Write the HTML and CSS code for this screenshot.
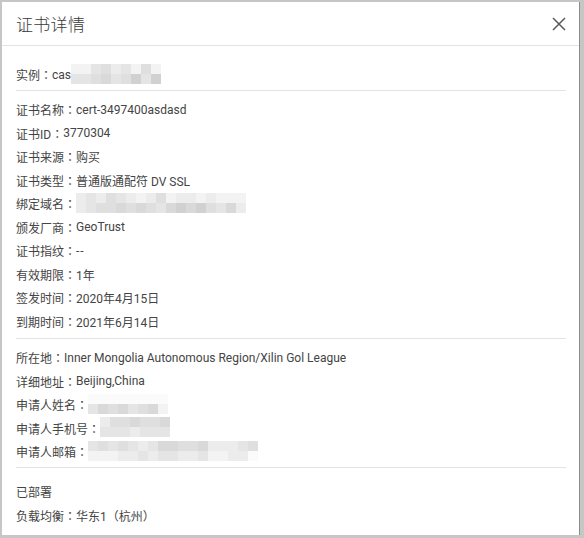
FILE: index.html
```html
<!DOCTYPE html>
<html lang="zh-CN">
<head>
<meta charset="utf-8">
<title>证书详情</title>
<link rel="stylesheet" href="styles.css">
</head>
<body>
<div class="modal">
  <div class="modal-header">
    <span class="modal-title">证书详情</span>
    <svg class="close" width="14" height="14" viewBox="0 0 14 14" aria-label="关闭"><path d="M1 1L13 13M13 1L1 13" stroke="#5a5a5a" stroke-width="1.5" fill="none"/></svg>
  </div>
  <div class="section first">
    <div class="row">实例<span class="p">：</span>cas<span class="mosaic"><i class="s1"></i><i class="s3"></i><i class="s1"></i><i class="s3"></i><i class="s3"></i><i class="s4"></i><i class="s4"></i><i class="s5"></i><i class="s2"></i><i class="s3"></i><i class="s3"></i><i class="s4"></i><i class="s1"></i><i class="s6"></i><i class="s4"></i><i class="s3"></i><i class="s1"></i><i class="s6"></i></span></div>
  </div>
  <div class="section">
    <div class="row">证书名称<span class="p">：</span>cert-3497400asdasd</div>
    <div class="row">证书ID<span class="p">：</span>3770304</div>
    <div class="row">证书来源<span class="p">：</span>购买</div>
    <div class="row">证书类型<span class="p">：</span>普通版通配符 DV SSL</div>
    <div class="row">绑定域名<span class="p">：</span><span class="mosaic"><i class="s2"></i><i class="s2"></i><i class="s3"></i><i class="s3"></i><i class="s2"></i><i class="s4"></i><i class="s4"></i><i class="s4"></i><i class="s3"></i><i class="s5"></i><i class="s2"></i><i class="s4"></i><i class="s1"></i><i class="s5"></i><i class="s2"></i><i class="s4"></i><i class="s4"></i><i class="s3"></i><i class="s1"></i><i class="s5"></i><i class="s2"></i><i class="s6"></i><i class="s2"></i><i class="s5"></i><i class="s1"></i><i class="s6"></i><i class="s2"></i><i class="s4"></i><i class="s1"></i><i class="s3"></i><i class="s1"></i><i class="s5"></i><i class="s1"></i><i class="s2"></i></span></div>
    <div class="row">颁发厂商<span class="p">：</span>GeoTrust</div>
    <div class="row">证书指纹<span class="p">：</span><span class="dash">--</span></div>
    <div class="row">有效期限<span class="p">：</span>1年</div>
    <div class="row">签发时间<span class="p">：</span>2020年4月15日</div>
    <div class="row">到期时间<span class="p">：</span>2021年6月14日</div>
  </div>
  <div class="section">
    <div class="row">所在地<span class="p">：</span>Inner Mongolia Autonomous Region/Xilin Gol League</div>
    <div class="row">详细地址<span class="p">：</span>Beijing,China</div>
    <div class="row">申请人姓名<span class="p">：</span><span class="mosaic"><i class="s0"></i><i class="s3"></i><i class="s0"></i><i class="s5"></i><i class="s0"></i><i class="s4"></i><i class="s0"></i><i class="s5"></i><i class="s0"></i><i class="s3"></i><i class="s0"></i><i class="s4"></i><i class="s0"></i><i class="s5"></i><i class="s0"></i><i class="s1"></i></span></div>
    <div class="row">申请人手机号<span class="p">：</span><span class="mosaic"><i class="s2"></i><i class="s3"></i><i class="s4"></i><i class="s3"></i><i class="s4"></i><i class="s3"></i><i class="s5"></i><i class="s2"></i><i class="s4"></i><i class="s3"></i><i class="s4"></i><i class="s3"></i><i class="s5"></i><i class="s3"></i></span></div>
    <div class="row">申请人邮箱<span class="p">：</span><span class="mosaic"><i class="s3"></i><i class="s1"></i><i class="s4"></i><i class="s1"></i><i class="s3"></i><i class="s1"></i><i class="s4"></i><i class="s2"></i><i class="s3"></i><i class="s2"></i><i class="s2"></i><i class="s3"></i><i class="s3"></i><i class="s2"></i><i class="s5"></i><i class="s3"></i><i class="s5"></i><i class="s3"></i><i class="s4"></i><i class="s2"></i><i class="s4"></i><i class="s2"></i><i class="s5"></i><i class="s3"></i><i class="s2"></i><i class="s1"></i><i class="s2"></i><i class="s1"></i><i class="s2"></i><i class="s2"></i><i class="s3"></i><i class="s2"></i><i class="s4"></i><i class="s0"></i></span></div>
  </div>
  <div class="section last">
    <div class="row">已部署</div>
    <div class="row">负载均衡<span class="p">：</span>华东1<span class="p">（</span>杭州<span class="p">）</span></div>
  </div>
</div>
</body>
</html>
```

FILE: styles.css
```css
html, body {
  margin: 0;
  padding: 0;
}
body {
  background: #c6c6c6;
  width: 584px;
  height: 538px;
  overflow: hidden;
  font-family: Roboto, "Noto Sans CJK SC", sans-serif;
  font-size: 12px;
  color: #444;
}
.modal {
  margin: 2px 0 0 2px;
  width: 578px;
  height: 533px;
  background: #fff;
  border-right: 1px solid #8c8c8c;
  box-sizing: border-box;
  display: flex;
  flex-direction: column;
}
.modal-header {
  height: 43px;
  border-bottom: 1px solid #e3e3e3;
  display: flex;
  align-items: center;
  justify-content: space-between;
  padding: 0 14px 0 14px;
}
.modal-title {
  font-size: 17px;
  color: #3a3a3a;
  font-family: "Noto Sans CJK SC", sans-serif;
  font-weight: 300;
  letter-spacing: 0.3px;
}
.close {
  display: block;
  margin-right: -1px;
}
.section {
  margin: 0 13px 0 14px;
  padding: 6px 0 6px;
  border-bottom: 1px solid #e3e3e3;
}
.section.first {
  padding: 16px 0 4.5px;
}
.section:nth-child(4) {
  padding: 6px 0 4.5px;
}
.section.last {
  border-bottom: none;
  padding-top: 11px;
}
.row {
  height: 23.5px;
  padding-top: 2px;
  box-sizing: border-box;
  white-space: nowrap;
  display: flex;
  align-items: center;
}
.p {
  font-family: "Noto Sans CJK TC", sans-serif;
}
.dash {
  letter-spacing: 1px;
}
.mosaic {
  display: inline-grid;
  grid-template-rows: 10px 10px;
  grid-auto-flow: column;
  grid-auto-columns: 10px;
  margin-top: -2px;
}
.mosaic i {
  display: block;
}
.s0 { background: #fbfbfb; }
.s1 { background: #f3f3f3; }
.s2 { background: #ececec; }
.s3 { background: #e5e5e5; }
.s4 { background: #dfdfdf; }
.s5 { background: #d9d9d9; }
.s6 { background: #d1d1d1; }
```
